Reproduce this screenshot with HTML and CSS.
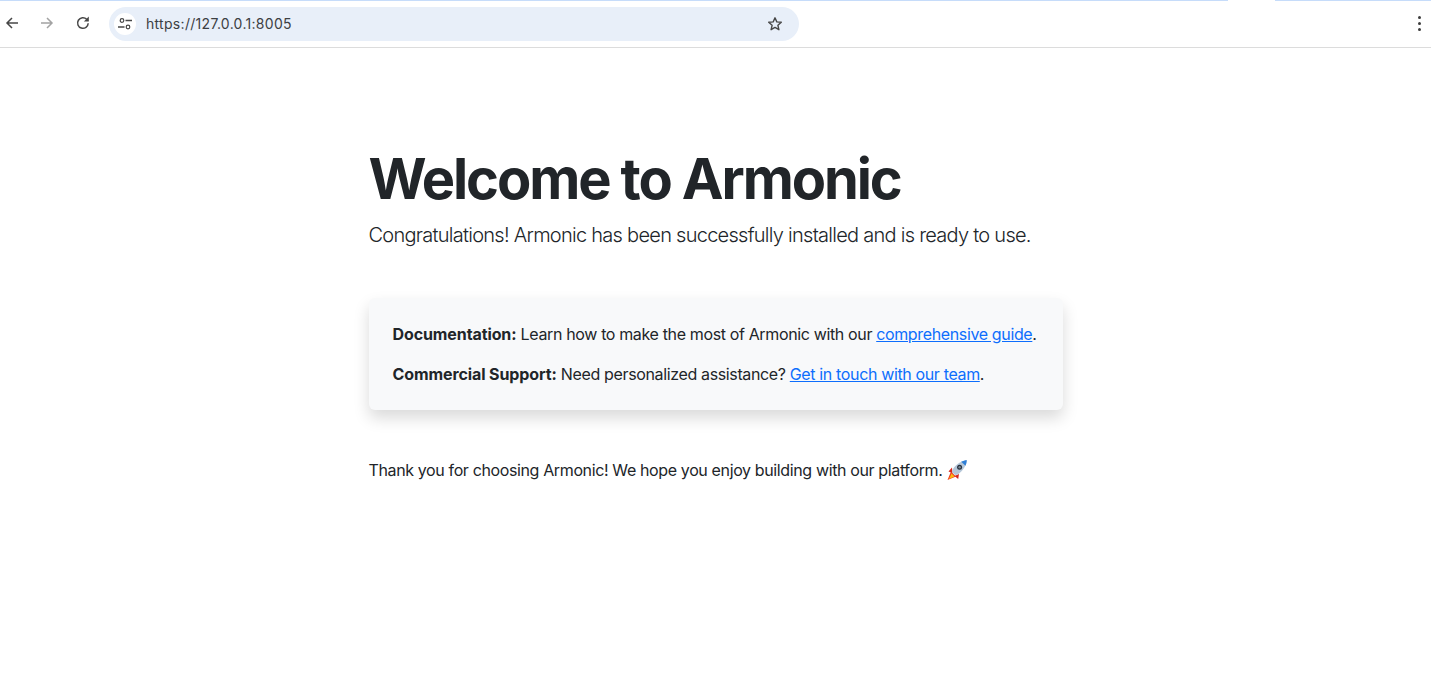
FILE: index.html
```html
<!DOCTYPE html>
<html lang="en">
<head>
    <meta charset="UTF-8">
    <title>Welcome to Armonic</title>
    <link rel="stylesheet" href="styles.css">
</head>
<body>
    <div class="tab-strip">
        <div class="strip-left"></div>
        <div class="strip-gap"></div>
        <div class="strip-right"></div>
    </div>
    <header class="toolbar">
        <svg class="nav-icon" width="16" height="16" viewBox="0 0 16 16"><path d="M14 8H3M8 3L3 8l5 5" fill="none" stroke="#474747" stroke-width="1.5"/></svg>
        <svg class="nav-icon forward" width="16" height="16" viewBox="0 0 16 16"><path d="M2 8h11M8 3l5 5-5 5" fill="none" stroke="#a3a3a3" stroke-width="1.5"/></svg>
        <svg class="nav-icon reload" width="16" height="16" viewBox="0 0 16 16"><path d="M13.200 8.200A5.300 5.300 0 1 1 11.700 4.300L13 5.800" fill="none" stroke="#474747" stroke-width="1.500"/><path d="M13.800 1.600v4.900H8.900z" fill="#474747"/></svg>
        <div class="omnibox">
            <span class="site-info">
                <svg width="14" height="14" viewBox="0 0 14 14"><circle cx="4" cy="3.500" r="1.800" fill="none" stroke="#474747" stroke-width="1.200"/><path d="M7.500 3.500H14M0 10h6.500" stroke="#474747" stroke-width="1.300"/><circle cx="10" cy="10" r="1.800" fill="none" stroke="#474747" stroke-width="1.200"/></svg>
            </span>
            <span class="url">https://127.0.0.1:8005</span>
            <svg class="star" width="16" height="16" viewBox="0 0 16 16"><path d="M8 1.800l1.800 4.100 4.500.4-3.400 3 1 4.400L8 11.400l-3.900 2.300 1-4.400-3.400-3 4.500-.4z" fill="none" stroke="#474747" stroke-width="1.400" stroke-linejoin="round"/></svg>
        </div>
        <div class="menu-dots"><i></i><i></i><i></i></div>
    </header>

    <main class="container">
        <h1>Welcome to Armonic</h1>
        <p class="lead">Congratulations! Armonic has been successfully installed and is ready to use.</p>
        <div class="info-card">
            <p><strong>Documentation:</strong> Learn how to make the most of Armonic with our <a href="#">comprehensive guide</a>.</p>
            <p><strong>Commercial Support:</strong> Need personalized assistance? <a href="#">Get in touch with our team</a>.</p>
        </div>
        <p class="thanks">Thank you for choosing Armonic! We hope you enjoy building with our platform.
            <svg class="rocket" width="22" height="22" viewBox="0 0 22 22">
                <path d="M5 12.500L1.500 21l8.500-3.500z" fill="#ef3e23"/>
                <path d="M5.500 14.500L3 20l5.500-2.500z" fill="#fdb813"/>
                <path d="M6 8.500L2.500 12.500l4 1.500zM13 15l-.8 5-3.700-3z" fill="#d5281e"/>
                <path d="M20.800 1.200C16 1.500 10.500 4.500 7 10c-.8 1.300-1 3-.6 3.600l2.400 2.200c.8.4 2.300 0 3.600-.9 5-3.500 8-9 8.400-13.700z" fill="#b4c6d8"/>
                <path d="M20.800 1.200C19 1.200 17 1.800 15.200 2.700l4.300 4C20.300 4.900 20.700 3 20.800 1.200z" fill="#2f7fd6"/>
                <circle cx="13.600" cy="8.200" r="2.500" fill="#27303c"/>
                <circle cx="13.600" cy="8.200" r="1.200" fill="#7b8794"/>
            </svg>
        </p>
    </main>
</body>
</html>
```

FILE: styles.css
```css
* {
    margin: 0;
    padding: 0;
    box-sizing: border-box;
}

body {
    font-family: Inter, "Liberation Sans", sans-serif;
    font-size: 16px;
    line-height: 1.5;
    color: #212529;
    background-color: #fff;
}

.tab-strip {
    display: flex;
    height: 1px;
    background-color: #c6dcfa;
}

.strip-left {
    width: 1228px;
}

.strip-gap {
    width: 47px;
    background-color: #fff;
}

.strip-right {
    flex: 1;
}

.toolbar {
    display: flex;
    align-items: center;
    height: 47px;
    padding-bottom: 1px;
    border-bottom: 1px solid #dcdcdc;
}

.nav-icon {
    flex: none;
    margin-left: 4px;
    margin-top: -1px;
}

.forward {
    margin-left: 19px;
}

.reload {
    margin-left: 20px;
}

.omnibox {
    display: flex;
    align-items: center;
    width: 690px;
    height: 34px;
    margin-left: 18px;
    padding: 0 16px 0 5px;
    background-color: #e8eff9;
    border-radius: 17px;
}

.site-info {
    display: flex;
    align-items: center;
    justify-content: center;
    width: 22px;
    height: 22px;
    background-color: #fff;
    border-radius: 50%;
}

.url {
    flex: 1;
    margin-left: 10px;
    font-size: 14px;
    letter-spacing: 0.3px;
    color: #3c4043;
}

.menu-dots {
    display: flex;
    flex-direction: column;
    gap: 3px;
    margin-left: auto;
    margin-right: 10px;
}

.menu-dots i {
    display: block;
    width: 3px;
    height: 3px;
    background-color: #3c3c3c;
    border-radius: 50%;
}

.container {
    width: 694px;
    margin: 0 auto;
    padding-top: 98px;
}

h1 {
    font-size: 56px;
    font-weight: 700;
    line-height: 1.2;
    letter-spacing: -2.1px;
    margin-bottom: 7px;
}

.lead {
    font-size: 20px;
    font-weight: 300;
    letter-spacing: -0.73px;
    margin-bottom: 48px;
}

.info-card {
    padding: 24px 24px 8px;
    background-color: #f8f9fa;
    border-radius: 6px;
    box-shadow: 0 8px 16px rgba(0, 0, 0, 0.15);
    margin-bottom: 48px;
}

.info-card p {
    margin-bottom: 16px;
    letter-spacing: -0.36px;
}

.info-card strong {
    letter-spacing: -0.1px;
}

a {
    color: #0d6efd;
}

.thanks {
    display: flex;
    align-items: center;
    gap: 4px;
    letter-spacing: -0.37px;
}

.rocket {
    flex: none;
}
```
